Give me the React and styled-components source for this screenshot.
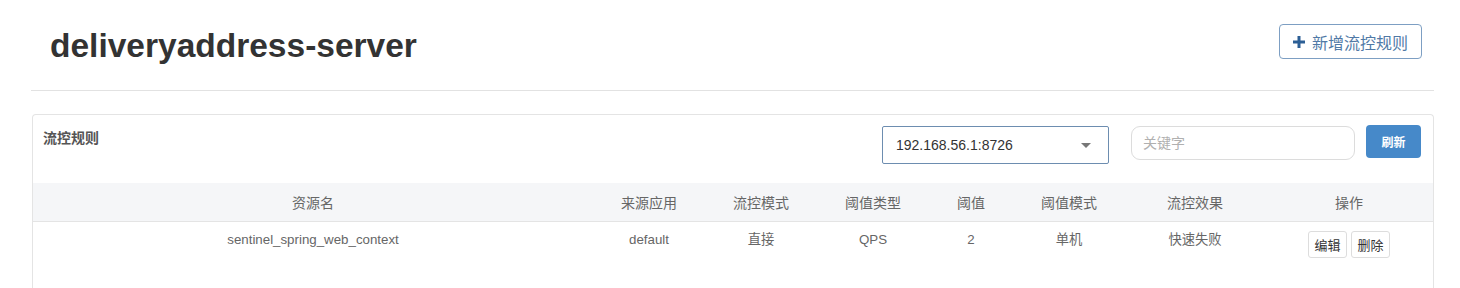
import React from "react";
import styled, { createGlobalStyle } from "styled-components";

const Global = createGlobalStyle`
  html, body { margin: 0; padding: 0; background: #fff; }
  body { font-family: "Liberation Sans", "Noto Sans CJK SC", sans-serif; color: #333; }
  * { box-sizing: border-box; }
`;

const Page = styled.div`
  padding: 0 26px 0 31px;
`;

const Header = styled.header`
  display: flex;
  justify-content: space-between;
  align-items: flex-start;
  height: 91px;
  padding: 0 12px 0 19px;
  border-bottom: 1px solid #e2e2e2;
`;

const Title = styled.h1`
  margin: 27px 0 0;
  font-size: 33.5px;
  line-height: 38px;
  font-weight: 700;
  color: #333;
`;

const AddButton = styled.button`
  margin-top: 24px;
  height: 35px;
  width: 143px;
  display: flex;
  align-items: center;
  justify-content: center;
  gap: 7px;
  background: #fff;
  border: 1px solid #7d9fc3;
  border-radius: 4px;
  color: #5079a6;
  font-family: inherit;
  font-size: 16px;
  padding: 0;
`;

const Plus = styled.svg`
  width: 12px;
  height: 12px;
  flex: none;
`;

const Panel = styled.section`
  margin: 23px 0 0 1px;
  border: 1px solid #e4e4e4;
  border-bottom: none;
  border-radius: 4px 4px 0 0;
  padding-bottom: 60px;
`;

const PanelHead = styled.div`
  display: flex;
  align-items: flex-start;
  height: 68px;
  padding: 11px 12px 0 10px;
`;

const PanelTitle = styled.div`
  margin-top: 2px;
  font-size: 14px;
  line-height: 20px;
  font-weight: 700;
  color: #555;
  flex: 1;
`;

const Select = styled.div`
  position: relative;
  width: 227px;
  height: 38px;
  border: 1px solid #6d8db0;
  border-radius: 2px;
  display: flex;
  align-items: center;
  padding-left: 13px;
  font-size: 14px;
  color: #333;
`;

const Caret = styled.span`
  position: absolute;
  right: 17px;
  top: 16px;
  width: 0;
  height: 0;
  border-left: 5px solid transparent;
  border-right: 5px solid transparent;
  border-top: 5px solid #777;
`;

const SearchInput = styled.input`
  margin-left: 22px;
  width: 224px;
  height: 34px;
  border: 1px solid #dcdcdc;
  border-radius: 9px;
  padding: 0 11px;
  font-family: inherit;
  font-size: 14px;
  color: #333;
  outline: none;
  &::placeholder { color: #b0b0b0; }
`;

const RefreshButton = styled.button`
  margin: -1px 0 0 11px;
  width: 55px;
  height: 33px;
  border: none;
  border-radius: 4px;
  background: #4689c9;
  color: #fff;
  font-family: inherit;
  font-weight: 700;
  font-size: 12px;
  padding: 0;
`;

const Table = styled.table`
  width: 100%;
  border-collapse: collapse;
  table-layout: fixed;
`;

const Th = styled.th`
  width: ${(p) => p.$w};
  height: 38px;
  background: #f5f6f8;
  border-bottom: 1px solid #e4e4e4;
  font-weight: 400;
  font-size: 14px;
  color: #666;
  text-align: center;
  padding: 0;
`;

const Td = styled.td`
  padding: 8px 0 0;
  height: 46px;
  vertical-align: top;
  text-align: center;
  font-size: 13.3px;
  line-height: 20px;
  color: #666;
`;

const Actions = styled.div`
  display: flex;
  justify-content: center;
  gap: 4px;
  margin-top: 1px;
`;

const SmallButton = styled.button`
  width: 39px;
  height: 27px;
  padding: 0;
  background: #fff;
  border: 1px solid #ddd;
  border-radius: 3px;
  font-family: inherit;
  font-size: 13px;
  color: #333;
`;

const columns = [
  ["资源名", "40%"],
  ["来源应用", "8%"],
  ["流控模式", "8%"],
  ["阈值类型", "8%"],
  ["阈值", "6%"],
  ["阈值模式", "8%"],
  ["流控效果", "10%"],
  ["操作", "12%"],
];

const rows = [
  ["sentinel_spring_web_context", "default", "直接", "QPS", "2", "单机", "快速失败"],
];

export default function App() {
  return (
    <>
      <Global />
      <Page>
        <Header>
          <Title>deliveryaddress-server</Title>
          <AddButton>
            <Plus viewBox="0 0 12 12">
              <path d="M4.5 0h3v4.5H12v3H7.5V12h-3V7.5H0v-3h4.5z" fill="#2c5f95" />
            </Plus>
            新增流控规则
          </AddButton>
        </Header>
        <Panel>
          <PanelHead>
            <PanelTitle>流控规则</PanelTitle>
            <Select>
              192.168.56.1:8726
              <Caret />
            </Select>
            <SearchInput placeholder="关键字" />
            <RefreshButton>刷新</RefreshButton>
          </PanelHead>
          <Table>
            <thead>
              <tr>
                {columns.map(([name, w]) => (
                  <Th key={name} $w={w}>{name}</Th>
                ))}
              </tr>
            </thead>
            <tbody>
              {rows.map((r) => (
                <tr key={r[0]}>
                  {r.map((c, i) => (
                    <Td key={i}>{c}</Td>
                  ))}
                  <Td>
                    <Actions>
                      <SmallButton>编辑</SmallButton>
                      <SmallButton>删除</SmallButton>
                    </Actions>
                  </Td>
                </tr>
              ))}
            </tbody>
          </Table>
        </Panel>
      </Page>
    </>
  );
}
